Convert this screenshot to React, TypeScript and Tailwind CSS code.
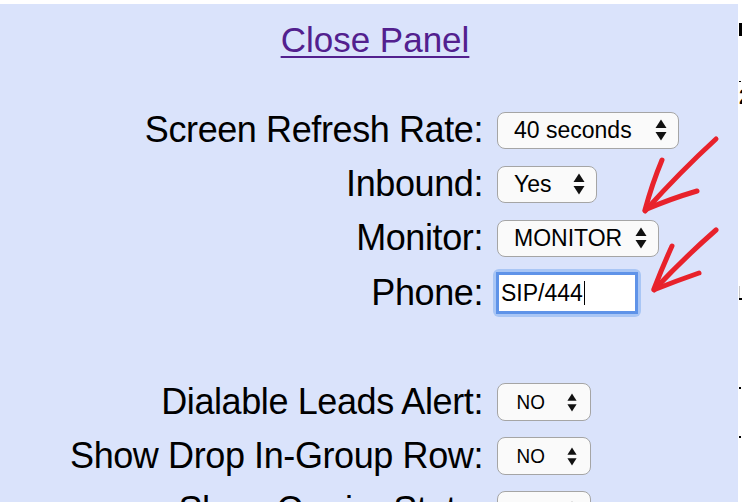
import React from "react";

const font = { fontFamily: '"Liberation Sans", Arial, sans-serif' };

const Arrows = () => (
  <svg className="h-[19px] w-[10px]" viewBox="0 0 12 22" preserveAspectRatio="none">
    <polygon points="0.5,9 6,0.5 11.5,9" fill="#111" />
    <polygon points="0.5,13 11.5,13 6,21.5" fill="#111" />
  </svg>
);

const FakeSelect = ({ value, className }: { value: string; className: string }) => (
  <div
    className={`flex h-[37px] items-center justify-between rounded-[8px] border-[1.5px] border-[#a5a5a5] bg-[#fafafa] pl-[16px] pr-[11px] text-[23px] text-black ${className}`}
  >
    <span>{value}</span>
    <svg className="h-[22px] w-[12px]" viewBox="0 0 12 22">
      <polygon points="0.5,9 6,0.5 11.5,9" fill="#111" />
      <polygon points="0.5,13 11.5,13 6,21.5" fill="#111" />
    </svg>
  </div>
);

const SmallSelect = ({ value }: { value: string }) => (
  <div className="flex h-[38px] w-[94px] items-center justify-between rounded-[8px] border-[1.5px] border-[#a5a5a5] bg-[#fafafa] pl-[17px] pr-[13px] text-[21px] text-black">
    <span className="scale-x-90">{value}</span>
    <Arrows />
  </div>
);

const Row = ({ label, h, children }: { label: string; h: string; children?: React.ReactNode }) => (
  <div className={`flex items-center ${h}`}>
    <div className="w-[483px] text-right text-[36px] leading-[40px] tracking-[-0.4px] text-black">{label}</div>
    <div className="ml-[14px]">{children}</div>
  </div>
);

export default function App() {
  return (
    <div className="flex h-[502px] w-[742px] overflow-hidden bg-white" style={font}>
      <div className="relative mt-[4px] h-[498px] w-[738px] bg-[#dae3fb]">
        <div className="pl-[12px] pt-[16px] text-center">
          <a href="#" className="text-[35px] leading-[40px] text-[#52208e] underline underline-offset-[4px] decoration-[2px]">
            Close Panel
          </a>
        </div>

        <div className="mt-[43px] flex flex-col">
          <Row label="Screen Refresh Rate:" h="h-[54px]">
            <FakeSelect value="40 seconds" className="w-[182px]" />
          </Row>
          <Row label="Inbound:" h="h-[54px]">
            <FakeSelect value="Yes" className="w-[100px]" />
          </Row>
          <Row label="Monitor:" h="h-[54px]">
            <FakeSelect value="MONITOR" className="w-[162px]" />
          </Row>
          <Row label="Phone:" h="h-[56px]">
            <div className="-ml-[4px] rounded-[6px] bg-[#a9c6f5] p-[3px]">
              <div className="flex h-[42px] w-[142px] items-center border-[3px] border-[#5f93e8] bg-white pl-[2px] text-[23px] text-black">
                <span>SIP/444</span>
                <span className="ml-[1px] h-[24px] w-[1.5px] bg-black" />
              </div>
            </div>
          </Row>
          <div className="h-[54px]" />
          <Row label="Dialable Leads Alert:" h="h-[54px]">
            <SmallSelect value="NO" />
          </Row>
          <Row label="Show Drop In-Group Row:" h="h-[54px]">
            <SmallSelect value="NO" />
          </Row>
          <Row label="Show Carrier Stats:" h="h-[54px]">
            <SmallSelect value="NO" />
          </Row>
        </div>

        <svg className="pointer-events-none absolute left-0 top-[-4px] h-[502px] w-[738px]" viewBox="0 0 738 502">
          <g stroke="#e8222b" strokeWidth="5" strokeLinecap="round" fill="none">
            <path d="M716 139 Q680 172 645 211" />
            <path d="M662 160 Q652 184 645 210" />
            <path d="M697 191 Q670 199 647 209" />
            <path d="M716 230 Q684 258 654 290" />
            <path d="M672 246 Q662 268 654 289" />
            <path d="M699 273 Q676 281 656 289" />
          </g>
        </svg>
      </div>

      <div className="relative flex-1">
        <div className="absolute left-[1px] top-[23px] h-[13px] w-[3px] bg-black" />
        <div className="absolute left-[1px] top-[81px] h-[1px] w-[2px] bg-black" />
        <div className="absolute left-[1px] top-[88px] text-[22px] font-bold leading-[18px] text-black">2</div>
        <div className="absolute left-[1px] top-[286px] h-[14px] w-[1px] bg-[#c8c8c8]" />
        <div className="absolute left-[1px] top-[298px] h-[2px] w-[3px] bg-black" />
        <div className="absolute left-[1px] top-[387px] h-[2px] w-[2px] bg-black" />
        <div className="absolute left-[1px] top-[436px] h-[2px] w-[2px] bg-black" />
      </div>
    </div>
  );
}
